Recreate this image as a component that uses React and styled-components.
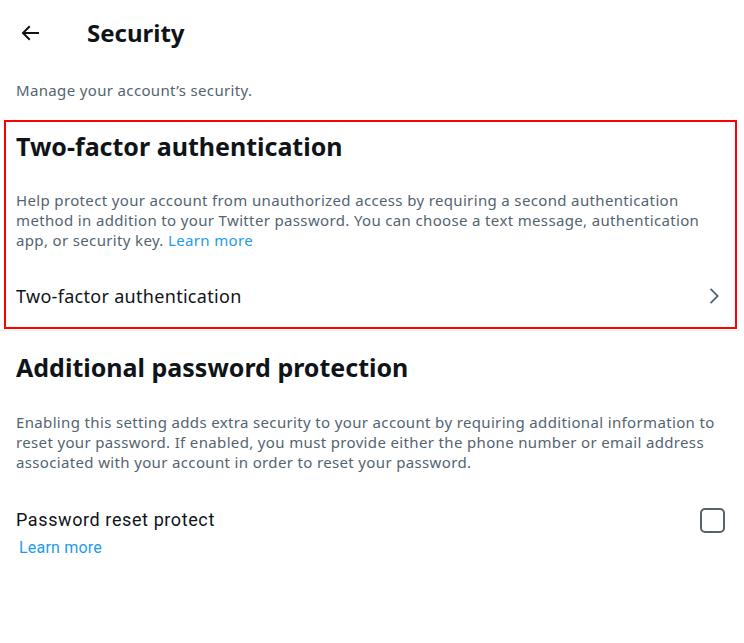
import React from "react";
import styled, { createGlobalStyle } from "styled-components";

const Global = createGlobalStyle`
  html, body { margin: 0; padding: 0; background: #fff; }
  body { font-family: "Segoe UI", "Noto Sans", "Open Sans", sans-serif; color: #0f1419; }
`;

const Page = styled.div`
  width: 744px;
  min-height: 643px;
  background: #fff;
  display: flex;
  flex-direction: column;
`;

const Header = styled.header`
  height: 66px;
  display: flex;
  align-items: center;
  padding: 0 16px;
  box-sizing: border-box;
`;

const BackButton = styled.button`
  width: 28px;
  height: 28px;
  margin-right: 43px;
  border: none;
  background: none;
  padding: 0;
  display: flex;
  align-items: center;
  justify-content: center;
  color: #0f1419;
`;

const Title = styled.h1`
  margin: 0;
  font-size: 24px;
  font-weight: 700;
  line-height: 28px;
`;

const Intro = styled.p`
  margin: 0;
  padding: 14px 16px 20px;
  font-size: 15px;
  line-height: 20px;
  letter-spacing: 0.35px;
  color: #536471;
`;

const Section = styled.section`
  margin: ${(p) => (p.$highlight ? "0 7px 0 4px" : "0")};
  border: ${(p) => (p.$highlight ? "2px solid #ff0000" : "none")};
  padding: ${(p) => (p.$highlight ? "0 0 0 10px" : "12px 0 0 16px")};
  display: flex;
  flex-direction: column;
`;

const Divider = styled.div`
  height: 1px;
  background: #eff3f4;
  margin: 1px 4px 0 0;
`;

const Heading = styled.h2`
  margin: 0;
  padding: 10px 0 12px 0;
  font-size: 25px;
  line-height: 28px;
  font-weight: 700;
`;

const Description = styled.p`
  margin: 0;
  padding: ${(p) => (p.$loose ? "18px 8px 12px 0" : "19px 8px 12px 0")};
  font-size: 15px;
  line-height: 20px;
  letter-spacing: 0.35px;
  color: #536471;
`;

const Link = styled.a`
  color: #1d9bf0;
  text-decoration: none;
`;

const NavRow = styled.div`
  display: flex;
  align-items: center;
  justify-content: space-between;
  padding: 22px 10px 19px 0;
  font-size: 18px;
  line-height: 24px;
  letter-spacing: 0.3px;
`;

const ToggleRow = styled.div`
  display: flex;
  justify-content: space-between;
  align-items: flex-start;
  padding: 24px 19px 0 0;
`;

const RowLabel = styled.div`
  display: flex;
  flex-direction: column;
`;

const RowText = styled.span`
  font-family: Roboto, "Noto Sans", sans-serif;
  font-size: 18px;
  line-height: 24px;
  letter-spacing: 0.6px;
  color: #0f1419;
`;

const SmallLink = styled(Link)`
  font-family: Roboto, "Noto Sans", sans-serif;
  font-size: 16px;
  line-height: 20px;
  letter-spacing: 0.2px;
  margin: 6px 0 0 3px;
`;

const Checkbox = styled.span`
  width: 21px;
  height: 21px;
  border: 2px solid #536471;
  border-radius: 5px;
  margin-top: 0;
`;

export default function App() {
  return (
    <Page>
      <Global />
      <Header>
        <BackButton aria-label="Back">
          <svg width="24" height="24" viewBox="0 0 24 24" fill="currentColor">
            <path d="M7.414 13l5.043 5.04-1.414 1.42L3.586 12l7.457-7.46 1.414 1.42L7.414 11H21v2H7.414z" />
          </svg>
        </BackButton>
        <Title>Security</Title>
      </Header>
      <Intro>Manage your account’s security.</Intro>
      <Section $highlight>
        <Heading>Two-factor authentication</Heading>
        <Description $loose>
          Help protect your account from unauthorized access by requiring a second authentication
          method in addition to your Twitter password. You can choose a text message, authentication
          app, or security key. <Link href="#">Learn more</Link>
        </Description>
        <NavRow>
          <span>Two-factor authentication</span>
          <svg width="22" height="22" viewBox="0 0 24 24" fill="#536471">
            <path d="M14.586 12L7.543 4.96l1.414-1.42L17.414 12l-8.457 8.46-1.414-1.42L14.586 12z" />
          </svg>
        </NavRow>
      </Section>
      <Divider />
      <Section>
        <Heading>Additional password protection</Heading>
        <Description>
          Enabling this setting adds extra security to your account by requiring additional information to
          reset your password. If enabled, you must provide either the phone number or email address
          associated with your account in order to reset your password.
        </Description>
        <ToggleRow>
          <RowLabel>
            <RowText>Password reset protect</RowText>
            <SmallLink href="#">Learn more</SmallLink>
          </RowLabel>
          <Checkbox />
        </ToggleRow>
      </Section>
    </Page>
  );
}
